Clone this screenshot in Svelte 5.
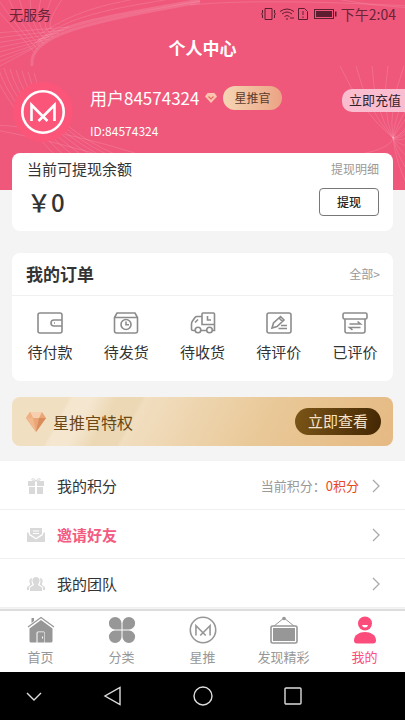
<script lang="ts">
  type Order = { label: string; icon: string };
  type Tab = { label: string; icon: string; active?: boolean };

  const orders: Order[] = [
    { label: "待付款", icon: "wallet" },
    { label: "待发货", icon: "parcel" },
    { label: "待收货", icon: "truck" },
    { label: "待评价", icon: "review" },
    { label: "已评价", icon: "done" },
  ];

  const tabs: Tab[] = [
    { label: "首页", icon: "home" },
    { label: "分类", icon: "category" },
    { label: "星推", icon: "star" },
    { label: "发现精彩", icon: "discover" },
    { label: "我的", icon: "mine", active: true },
  ];

  const fan = Array.from({ length: 8 }, (_, i) => i);
</script>

{#snippet logo()}
  <circle cx="22" cy="22" r="20.7" stroke-width="2.6" />
  <path d="M10.500 31V15L26.500 31M33.500 31V15L17.500 31" stroke-width="2.6" />
{/snippet}

{#snippet arrow()}
  <svg class="arrow" width="8" height="14" viewBox="0 0 8 14">
    <path d="M1 1l6 6-6 6" />
  </svg>
{/snippet}

<div class="page">
  <header>
    <svg class="lines" viewBox="0 0 405 190" preserveAspectRatio="none">
      {#each fan as i (i)}
        <path d="M{i * 11 - 14} -2 Q{14 + i * 4} 28 {34 + i * 3} {52 - i * 3}" />
        <path d="M-4 {68 - i * 5} L{34 + i * 5} {48 - i * 3}" />
        <path d="M{i * 6 - 8} {66 + i} Q{4 + i * 6} {104 + i * 3} {56 + i * 9} 156" />
        <path d="M{340 + i * 16} 66 Q{360 + i * 7} 110 393 138" />
        <path d="M393 138 Q{396 + i * 3} {165 - i * 5} 410 {190 - i * 16}" />
      {/each}
      <path class="wide" d="M32 66C28 34 90 22 200 2" />
      <path class="wide" d="M38 42C66 22 120 14 200 0" />
      <path d="M34 44C70 12 120 8 200 -6M40 34C80 8 110 4 150 -4" />
      <path d="M190 5Q260 -2 410 6M330 -2Q370 6 410 8" />
      <path d="M-4 125Q60 128 150 158M-4 130Q50 140 110 158" />
      <path d="M393 138Q390 150 350 156" />
    </svg>

    <div class="status">
      <span>无服务</span>
      <div class="signals">
        <svg width="78" height="14" viewBox="0 0 78 14">
          <path d="M5 1.500h7v11H5zM2.500 3v3l-1 1 1 1v3M14.500 3v3l1 1-1 1v3" />
          <path d="M20 4.500Q27-.5 34 4.500M22 7Q27 3 32 7M24.500 9.500Q27 7.500 29.500 9.500" />
          <path d="M27 11v2M30 11h4" />
          <path d="M38.500 1.500h6l3 3v8h-9zM43 4v4M43 9.500v1.500" />
          <rect x="54.500" y="2.500" width="19" height="9" />
          <path class="solid" d="M56 4h16v6H56zM75 4.500h1.500v5H75z" />
        </svg>
        <span>下午2:04</span>
      </div>
    </div>

    <h1>个人中心</h1>

    <div class="profile">
      <div class="avatar">
        <svg width="44" height="44" viewBox="0 0 44 44">{@render logo()}</svg>
      </div>
      <div class="user">
        <div class="name">
          <span>用户84574324</span>
          <svg width="12" height="10" viewBox="0 0 12 10">
            <path d="M2.500 0h7L12 3.500 6 10 0 3.500z" fill="#fcc3ae" />
            <path d="M3.500 3.500L6 6l2.500-2.500" fill="none" stroke="#e66a62" stroke-width="1.200" />
          </svg>
          <span class="tag">星推官</span>
        </div>
        <span class="uid">ID:84574324</span>
      </div>
      <button class="recharge">立即充值</button>
    </div>
  </header>

  <main>
    <section class="card balance">
      <div class="row">
        <span class="label">当前可提现余额</span>
        <a href="#detail">提现明细</a>
      </div>
      <div class="row amount">
        <strong>￥0</strong>
        <button>提现</button>
      </div>
    </section>

    <section class="card orders">
      <div class="row heading">
        <h2>我的订单</h2>
        <a href="#orders">全部&gt;</a>
      </div>
      <div class="order-list">
        {#each orders as order (order.label)}
          <button>
            <svg width="26" height="22" viewBox="0 0 26 22">
              {#if order.icon === "wallet"}
                <rect x="1" y="1" width="24" height="20" rx="2" />
                <path d="M25 8H17a3 3 0 0 0 0 6H25M17 11h1" />
              {:else if order.icon === "parcel"}
                <path d="M1.500 5.500L4 1h18l2.500 4.500V19a2 2 0 0 1-2 2h-19a2 2 0 0 1-2-2zM1.500 5.500h23" />
                <circle cx="13" cy="12.500" r="5" />
                <path d="M13 9.500v3.300h3" />
              {:else if order.icon === "truck"}
                <path
                  d="M5 18.500H3q-1.500 0-1.500-1.500V12q0-1.500 1-3L5 5.500Q5.500 4.500 7 4.500h5M11 18.500h6M22 18.500h2.500V2q0-1-1-1H13q-1 0-1 1v10.500H24.500"
                />
                <path d="M5 10.500L8 7.500M17.500 4v4H21" />
                <circle cx="8" cy="18" r="2.800" />
                <circle cx="19.500" cy="18" r="2.800" />
              {:else if order.icon === "review"}
                <rect x="1" y="1" width="24" height="20" rx="2" />
                <path d="M6 16l1.500-5 7-6.500 3.500 3.500-7 6.500zM13 6l3.500 3.500M15 13.500H21M12.500 16.500H21" />
              {:else}
                <rect x="1" y="1" width="24" height="6" rx="1.500" />
                <path d="M3 7v12a2 2 0 0 0 2 2h16a2 2 0 0 0 2-2V7M7.500 12h11l-3-2.500M18.500 15.500h-11l3 2.500" />
              {/if}
            </svg>
            <span>{order.label}</span>
          </button>
        {/each}
      </div>
    </section>

    <section class="vip">
      <svg width="20" height="20" viewBox="0 0 20 20">
        <path d="M4 0h12l4 6-10 14L0 6z" fill="#e9a777" />
        <path d="M4 0h12l-3 6H7z" fill="#f8cfae" />
        <path d="M0 6h7l3 14z" fill="#f2b88d" />
        <path d="M20 6h-7l-3 14z" fill="#d98c5c" />
        <path d="M4 0l3 6H0z" fill="#efb184" />
      </svg>
      <span>星推官特权</span>
      <button>立即查看</button>
    </section>

    <nav class="menu">
      <a href="#points">
        <svg width="18" height="16" viewBox="0 0 18 16">
          <path d="M1 3h7v5H1zM10 3h7v5h-7zM2 9h6v7H2zM10 9h6v7h-6z" />
          <path class="line" d="M9 3C4 3 4 0 6 .7Q8 1 9 3Q10 1 12 .7C14 0 14 3 9 3" />
        </svg>
        <span class="title">我的积分</span>
        <span class="points">当前积分：<em>0积分</em></span>
        {@render arrow()}
      </a>
      <a href="#invite" class="hot">
        <svg width="18" height="16" viewBox="0 0 18 16">
          <path d="M3 1h12v6l-6 4-6-4zM0 5l2 1.500V8l7 4.500L16 8V6.500L18 5v10H0z" />
          <path class="cut" d="M6 4h6M6 6.500h6" />
        </svg>
        <span class="title">邀请好友</span>
        {@render arrow()}
      </a>
      <a href="#team">
        <svg width="18" height="16" viewBox="0 0 18 16">
          <path
            d="M9 1a3.500 3.500 0 0 1 3 5.500l-1 2.500 4 2.500V15H3v-3.500L7 9 6 6.500A3.500 3.500 0 0 1 9 1z"
          />
          <path
            d="M5 2a3 3 0 0 0-2 5l0 2-3 2v3h2v-3l3.500-2.500L4.500 6zM13 2a3 3 0 0 1 2 5v2l3 2v3h-2v-3l-3.500-2.500 1-2.500z"
          />
        </svg>
        <span class="title">我的团队</span>
        {@render arrow()}
      </a>
    </nav>
  </main>

  <nav class="tabs">
    {#each tabs as tab (tab.label)}
      <button class:active={tab.active}>
        <svg width="28" height="28" viewBox="0 0 28 28">
          {#if tab.icon === "home"}
            <path
              class="solid"
              d="M14 4L2.500 12.500v12.500q0 1.500 1.500 1.500h5.500V17q0-1.500 1.500-1.500h5.500q1.500 0 1.500 1.500v9.500h6q1.500 0 1.500-1.500V12.500z"
            />
            <path class="solid" d="M10.500 17q0-.7.700-.7h5.600q.7 0 .7.700v9.500h-7zM4.500 2h2.500v3l-2.500 2z" />
            <path d="M1 11L14 1.500 27 11" stroke-width="1.200" />
            <path d="M15.500 20.500v2" stroke="#fff" />
          {:else if tab.icon === "category"}
            <path
              class="solid"
              d="M13.500 13.500H7A6.300 6.300 0 1 1 13.500 7zM14.500 13.500V7A6.300 6.300 0 1 1 21 13.500zM13.500 14.500V21A6.300 6.300 0 1 1 7 14.500zM14.500 14.500H21A6.300 6.300 0 1 1 14.500 21z"
            />
          {:else if tab.icon === "star"}
            <g transform="translate(.5 .5) scale(.614)">{@render logo()}</g>
          {:else if tab.icon === "discover"}
            <path d="M4 10L14 2l10 8" stroke-width="1" />
            <circle class="solid" cx="14" cy="2.500" r="1.800" />
            <rect x="1" y="10" width="26" height="17" rx="1.500" stroke-width="1.600" />
            <path class="solid" d="M3 12h22v13h-22z" />
          {:else}
            <circle class="solid" cx="14" cy="7.500" r="7" />
            <path class="solid" d="M3 24.500C3 13 25 13 25 24.500q0 3-3 3H6q-3 0-3-3z" />
            <path d="M11 9h6q-.5 2.500-3 2.500T11 9z" fill="#fff" stroke="none" />
          {/if}
        </svg>
        <span>{tab.label}</span>
      </button>
    {/each}
  </nav>

  <footer>
    <button aria-label="收起">
      <svg width="22" height="22" viewBox="0 0 22 22"><path d="M4 8l7 7 7-7" /></svg>
    </button>
    <div class="keys">
      <button aria-label="返回">
        <svg width="22" height="22" viewBox="0 0 22 22"><path d="M18 2.500v17L3 11z" /></svg>
      </button>
      <button aria-label="主屏幕">
        <svg width="22" height="22" viewBox="0 0 22 22"><circle cx="11" cy="11" r="9" /></svg>
      </button>
      <button aria-label="最近任务">
        <svg width="22" height="22" viewBox="0 0 22 22">
          <rect x="3" y="3" width="16" height="16" rx="1" />
        </svg>
      </button>
    </div>
  </footer>
</div>

<style>
  :global(body) {
    margin: 0;
  }

  .page {
    display: flex;
    flex-direction: column;
    min-height: 100vh;
    background: #f4f4f4;
    color: #333;
    font-family: "Noto Sans CJK SC", sans-serif;
    font-size: 15px;
    line-height: 20px;
  }

  button {
    padding: 0;
    border: 0;
    background: none;
    color: inherit;
    font: inherit;
    cursor: pointer;
  }

  a {
    color: inherit;
    text-decoration: none;
  }

  svg {
    flex: none;
    fill: none;
  }

  h1,
  h2 {
    margin: 0;
    font-size: 17px;
    font-weight: 700;
  }

  header {
    position: relative;
    padding-bottom: 48px;
    background: #ef587b;
    color: #fff;
  }

  .lines {
    position: absolute;
    inset: 0;
    width: 100%;
    height: 100%;
    stroke: #fff;
    stroke-opacity: 0.13;
  }

  .lines .wide {
    stroke-width: 3;
  }

  .status {
    position: relative;
    display: flex;
    justify-content: space-between;
    padding: 4px 9px;
    color: #6a2438;
    font-size: 14px;
  }

  .signals {
    display: flex;
    align-items: center;
    gap: 3px;
  }

  .signals svg {
    stroke: #5e1d30;
  }

  .signals .solid {
    fill: #5e1d30;
    stroke: none;
  }

  h1 {
    position: relative;
    padding: 10px 0;
    text-align: center;
  }

  .profile {
    position: relative;
    display: flex;
    align-items: flex-start;
    padding: 14px 0 0 13px;
  }

  .avatar {
    display: grid;
    place-items: center;
    width: 60px;
    height: 60px;
    border-radius: 50%;
    background: #fb5679;
    stroke: #fff;
  }

  .user {
    flex: 1;
    padding: 4px 0 0 17px;
  }

  .name {
    display: flex;
    align-items: center;
    gap: 6px;
    margin-bottom: 13px;
    font-size: 17px;
  }

  .tag {
    padding: 2px 11px;
    border-radius: 12px;
    background: linear-gradient(90deg, #f5d6b4, #eba384);
    color: #5b3a2c;
    font-size: 12px;
  }

  .uid {
    display: block;
    font-size: 12px;
    line-height: 16px;
  }

  .recharge {
    margin-top: 7px;
    padding: 1px 4px 2px 7px;
    border-radius: 10px 0 0 10px;
    background: #fabdd0;
    color: #33222a;
    font-size: 13px;
  }

  main {
    position: relative;
    flex: 1;
    margin-top: -37px;
  }

  .card {
    margin: 0 12px;
    border-radius: 8px;
    background: #fff;
  }

  .row {
    display: flex;
    align-items: center;
    justify-content: space-between;
  }

  .row a {
    color: #999;
    font-size: 12px;
  }

  .balance {
    padding: 6px 14px 15px 15px;
  }

  .amount {
    padding-top: 9px;
  }

  .balance strong {
    font-size: 24px;
    font-weight: 500;
  }

  .balance button {
    width: 60px;
    height: 28px;
    border: 1px solid #777;
    border-radius: 4px;
    color: #222;
    font-size: 12px;
    font-weight: 500;
  }

  .orders {
    margin-top: 22px;
  }

  .heading {
    padding: 11px 13px 11px 14px;
    border-bottom: 1px solid #f0f0f0;
  }

  .order-list {
    display: flex;
    padding: 16px 0 19px;
  }

  .order-list button {
    display: flex;
    flex: 1;
    flex-direction: column;
    align-items: center;
    gap: 8px;
  }

  .order-list svg {
    stroke: #8c8c8c;
    stroke-width: 1.6;
  }

  .vip {
    display: flex;
    align-items: center;
    gap: 7px;
    margin: 16px 12px 15px;
    padding: 11px 12px 11px 14px;
    border-radius: 8px;
    background: linear-gradient(
      118deg,
      #f1dfc2 0 14%,
      #f4e6cf 15% 20%,
      #ecd8b4 26% 32%,
      #f1dec0 33%,
      #e9c897 66%,
      #e5b983
    );
    color: #694815;
    font-size: 16px;
  }

  .vip button {
    margin-left: auto;
    padding: 3px 13px 4px;
    border-radius: 14px;
    background: linear-gradient(100deg, #7b5517, #432704);
    color: #f7e4c8;
    font-size: 15px;
  }

  .menu {
    background: #fff;
  }

  .menu a {
    display: flex;
    align-items: center;
    padding: 15px 25px 13px 27px;
    border-bottom: 1px solid #f0f0f0;
  }

  .menu svg {
    fill: #d9d9d9;
  }

  .menu .line {
    fill: none;
    stroke: #d9d9d9;
  }

  .menu .cut {
    stroke: #fff;
  }

  .menu .title {
    flex: 1;
    margin-left: 12px;
  }

  .hot .title {
    color: #f45b80;
    font-weight: 700;
  }

  .points {
    margin-right: 13px;
    color: #999;
    font-size: 13px;
  }

  .points em {
    color: #e8481c;
    font-style: normal;
  }

  .menu .arrow {
    fill: none;
    stroke: #aaa;
    stroke-width: 1.3;
  }

  .tabs {
    position: relative;
    display: flex;
    padding: 5px 0;
    border-top: 2px solid #ddd;
    background: #fff;
  }

  .tabs button {
    display: flex;
    flex: 1;
    flex-direction: column;
    align-items: center;
    gap: 3px;
    color: #979797;
    font-size: 13px;
  }

  .tabs svg {
    stroke: currentColor;
  }

  .tabs .solid {
    fill: currentColor;
    stroke: none;
  }

  .tabs .active {
    color: #fb4c7b;
  }

  footer {
    display: grid;
    grid-template-columns: 1fr auto 1fr;
    padding: 13px 23px;
    background: #000;
  }

  footer button {
    width: 22px;
    height: 22px;
  }

  .keys {
    display: flex;
    gap: 68px;
  }

  footer svg {
    display: block;
    stroke: #ddd;
    stroke-width: 1.4;
  }
</style>
